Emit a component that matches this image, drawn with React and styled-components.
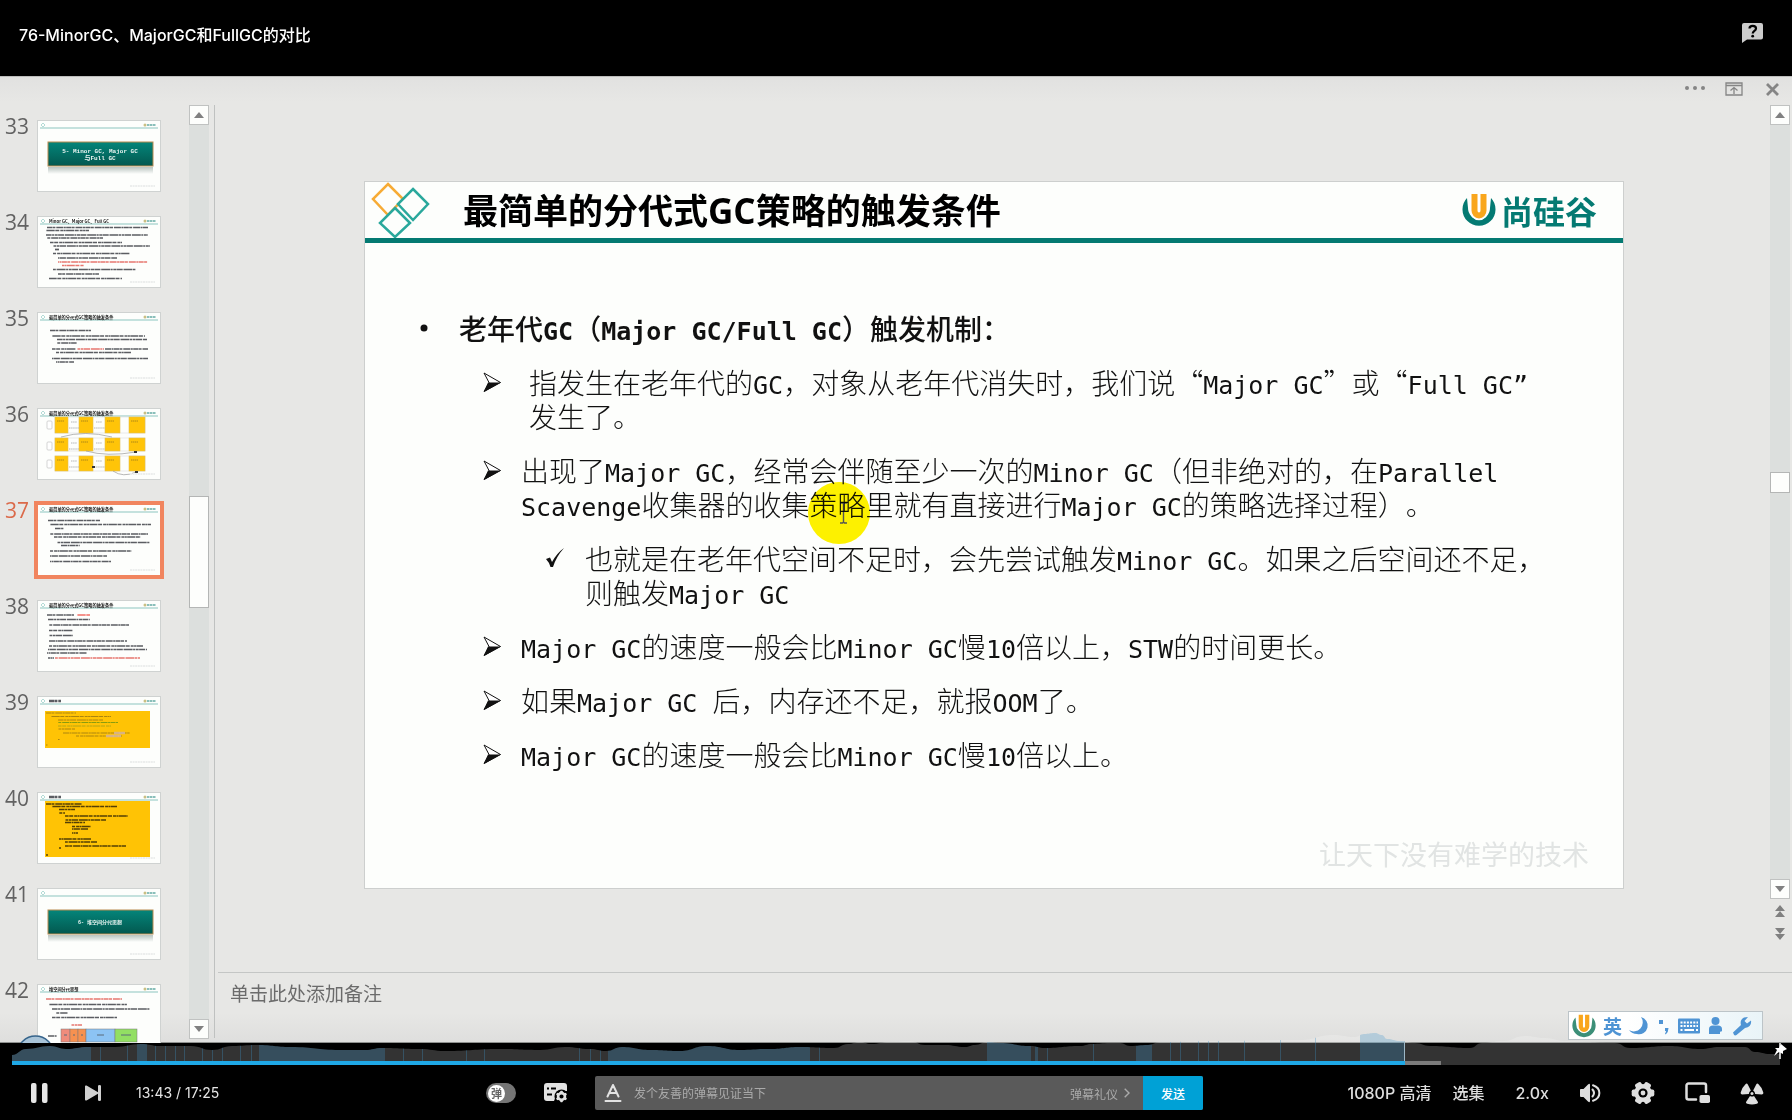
import React from "react";
import styled, { createGlobalStyle, css } from "styled-components";

const SANS = `"Inter", "Noto Sans CJK SC", sans-serif`;
const TEAL = "#047a72";

const Global = createGlobalStyle`
  *, *::before, *::after { box-sizing: border-box; }
  body { margin: 0; background: #000; font-family: ${SANS}; }
  button { margin: 0; padding: 0; border: 0; background: none; color: inherit; font: inherit; cursor: pointer; }
  input { margin: 0; padding: 0; border: 0; background: none; font: inherit; }
  ul { margin: 0; padding: 0; list-style: none; }
  h1, h2, p { margin: 0; }
  svg { display: block; }
`;

/* ---------- page ---------- */

const Page = styled.div`
  display: flex;
  flex-direction: column;
  height: 100vh;
  background: #000;
`;

const Header = styled.header`
  display: flex;
  align-items: flex-start;
  justify-content: space-between;
  height: 76px;
  padding: 23px 29px 0 19px;
  color: #fff;
`;

const VideoTitle = styled.h1`
  font-size: 16px;
  font-weight: 500;
  line-height: 24px;
`;

const Video = styled.main`
  position: relative;
  display: flex;
  flex: 1;
  flex-direction: column;
  min-height: 0;
  background: linear-gradient(#e1e1e0, #e7e7e5 26px, #e7e7e5 calc(100% - 30px), #dededd);
  box-shadow: inset 0 1px #bdbdbc, inset 0 -1px #8e908e;
`;

const WindowBar = styled.div`
  display: flex;
  align-items: flex-start;
  justify-content: flex-end;
  gap: 20px;
  height: 29px;
  padding: 4px 11px 0;
  color: #858585;
`;

const Workspace = styled.div`
  display: flex;
  flex: 1;
  min-height: 0;
`;

/* ---------- slide list ---------- */

const ThumbPane = styled.nav`
  width: 189px;
  padding: 15px 0 0 5px;
  overflow: hidden;
`;

const ThumbList = styled.ul`
  display: flex;
  flex-direction: column;
  gap: 24px;
`;

const ThumbItem = styled.li`
  display: flex;
  align-items: flex-start;
  height: 72px;
`;

const ThumbNumber = styled.span`
  width: 32px;
  font: 21px/12px "Open Sans", sans-serif;
  color: ${(p) => (p.$active ? "#db6a4a" : "#626262")};
`;

const ThumbButton = styled.button`
  width: 124px;
  height: 72px;
  overflow: hidden;
  background: #fdfefc;
  border: 1px solid #cfd2d1;
  ${(p) =>
    p.$active &&
    css`
      border-color: #f1855f;
      outline: 3px solid #f1855f;
    `}
`;

/* ---------- scroll bars ---------- */

const ScrollBar = styled.div`
  display: flex;
  flex: none;
  flex-direction: column;
  width: 20px;
  margin-right: ${(p) => p.$right}px;
  margin-bottom: ${(p) => p.$bottom}px;
  background: linear-gradient(#dcdfdd, #dcdfdd) top / 100% calc(100% - ${(p) => p.$tail}px) no-repeat;
`;

const ScrollArrow = styled.button`
  display: grid;
  place-items: center;
  flex: none;
  height: 20px;
  background: #fdfefc;
  border: 1px solid #c0c2c1;
`;

const ScrollSpace = styled.div`
  flex: ${(p) => p.$grow};
`;

const ScrollThumb = styled.div`
  flex: none;
  height: ${(p) => p.$size}px;
  background: #fdfefc;
  border: 1px solid #b4b6b5;
`;

const PageArrow = styled.button`
  display: grid;
  place-items: center;
  height: 23px;
`;

/* ---------- stage ---------- */

const Main = styled.section`
  display: flex;
  flex: 1;
  flex-direction: column;
  min-width: 0;
  margin-bottom: 5px;
  border-left: 1px solid #bfc1c0;
`;

const StageRow = styled.div`
  display: flex;
  flex: 1;
  min-height: 0;
`;

const Stage = styled.div`
  display: flex;
  flex: 1;
  align-items: center;
  min-width: 0;
  padding: 0 146px 7px 149px;
`;

const Notes = styled.input`
  height: 66px;
  margin-left: 3px;
  padding: 0 12px 26px;
  border-top: 1px solid #c4c6c5;
  outline: 0;
  font: 19px/24px "Noto Sans CJK SC", sans-serif;
  color: #666;
  &::placeholder { color: #6b6b6b; opacity: 1; }
`;

const Slide = styled.article`
  position: relative;
  display: flex;
  flex-direction: column;
  width: 100%;
  aspect-ratio: 16 / 9;
  background: #fdfefc;
  border: 1px solid #cdcfce;
  color: #111;
  text-spacing-trim: space-all;
`;

const SlideHead = styled.header`
  display: flex;
  align-items: center;
  height: 61px;
  padding: 0 26px 0 6px;
  border-bottom: 5px solid ${TEAL};
`;

const SlideTitle = styled.h2`
  flex: 1;
  padding: 2px 0 0 32px;
  font: 700 35px/50px "Open Sans", "Noto Sans CJK SC", sans-serif;
  color: #000;
`;

const Brand = styled.div`
  display: flex;
  align-items: center;
  gap: 5px;
  font: 700 32px/40px "Noto Sans CJK SC", sans-serif;
  color: ${TEAL};
`;

const Points = styled.ul`
  display: flex;
  flex: 1;
  flex-direction: column;
  gap: 20px;
  padding-top: 68px;
`;

const indents = { 1: [54, 40], 2: [118, 38], 3: [181, 39] };

const Point = styled.li`
  display: flex;
  padding-left: ${(p) => indents[p.$level][0]}px;
  font: ${(p) => (p.$level === 1 ? 500 : 300)} 28px/34px "Noto Sans CJK SC", sans-serif;
`;

const Marker = styled.span`
  display: flex;
  flex: none;
  align-items: center;
  width: ${(p) => indents[p.$level][1] + (p.$wide ? 8 : 0)}px;
  height: 34px;
`;

const Code = styled.span`
  font: ${(p) => (p.$bold ? 700 : 400)} 25px/0 "DejaVu Sans Mono", monospace;
  white-space: pre;
`;

const Motto = styled.p`
  padding: 0 34px 14px;
  font: 27px/40px "Noto Sans CJK SC", sans-serif;
  color: #e1e4e3;
  text-align: right;
`;

const Spotlight = styled.div`
  position: absolute;
  top: 300px;
  left: 443px;
  display: grid;
  place-items: center;
  width: 62px;
  height: 62px;
  padding-left: 8px;
  background: #fff200;
  border-radius: 50%;
  mix-blend-mode: multiply;
`;

const ImeBar = styled.div`
  position: absolute;
  right: 29px;
  bottom: 3px;
  display: flex;
  align-items: center;
  gap: 7px;
  height: 29px;
  padding: 0 9px 0 3px;
  background: linear-gradient(100deg, #fff 30%, #e9f4f8);
  border: 1px solid #bcc4c8;
  font: 700 19px/24px "Noto Sans CJK SC", sans-serif;
  color: #4f94d4;
`;

/* ---------- player bar ---------- */

const PlayerBar = styled.footer`
  position: relative;
  flex: none;
  padding: 18px 12px 0;
`;

const HeatMap = styled.svg`
  position: absolute;
  top: -13px;
  left: 12px;
  width: calc(100% - 24px);
  height: 31px;
`;

const PinMark = styled.svg`
  position: absolute;
  top: 0;
  right: 4px;
`;

const Track = styled.div`
  position: relative;
  height: 4px;
  background: #333;
`;

const TrackFill = styled.div`
  position: absolute;
  inset: 0 auto 0 0;
  width: ${(p) => p.$to}%;
  background: ${(p) => p.$color};
`;

const Controls = styled.div`
  display: flex;
  align-items: center;
  height: 55px;
  padding: 1px 16px 0 19px;
  color: #dedede;
`;

const Group = styled.div`
  display: flex;
  flex: none;
  align-items: center;
  gap: ${(p) => p.$gap || 0}px;
  width: ${(p) => (p.$width ? p.$width + "px" : "auto")};
`;

const Time = styled.span`
  font-size: 14px;
  line-height: 20px;
  color: #e6e6e6;
`;

const Switch = styled.label`
  position: relative;
  display: flex;
  align-items: center;
  width: 30px;
  height: 20px;
  padding: 2px;
  background: #757575;
  border-radius: 10px;
  cursor: pointer;
  input { position: absolute; inset: 0; opacity: 0; }
`;

const Knob = styled.span`
  flex: none;
  width: 17px;
  height: 17px;
  border-radius: 50%;
  background: #fff;
  font: 700 11px/17px "Noto Sans CJK SC", sans-serif;
  color: #666;
  text-align: center;
`;

const DanmakuBox = styled.form`
  display: flex;
  align-items: center;
  flex: 1;
  height: 34px;
  max-width: 608px;
  margin-right: auto;
  overflow: hidden;
  background: #5a5a5a;
  border-radius: 2px;
  font-size: 12px;
`;

const FontButton = styled.button`
  width: 39px;
  padding-left: 9px;
`;

const DanmakuInput = styled.input`
  flex: 1;
  min-width: 0;
  outline: 0;
  color: #fff;
  &::placeholder { color: #aaa; opacity: 1; }
`;

const Etiquette = styled.a`
  display: flex;
  align-items: center;
  gap: 6px;
  padding-right: 13px;
  color: #aaa;
  text-decoration: none;
`;

const Send = styled.button`
  width: 60px;
  height: 34px;
  background: #00a1d6;
  color: #fff;
  font-weight: 500;
`;

const TextButton = styled.button`
  font-size: 16px;
  font-weight: 500;
  line-height: 24px;
`;

/* ---------- drawings ---------- */

const BrandMark = ({ size, ring = TEAL }) => (
  <svg width={size} height={size} viewBox="0 0 34 34" aria-hidden="true">
    <path d="M5 5A16.500 16.500 0 1 0 29 5L28 15A11 11.500 0 1 1 6 15Z" fill={ring} />
    <path d="M12.500 1V17.500a4.500 5 0 0 0 9 0V1" fill="none" stroke="#fff" strokeWidth="9.500" />
    <path d="M12.500 1V17.500a4.500 5 0 0 0 9 0V1" fill="none" stroke="#f9a61c" strokeWidth="6" />
  </svg>
);

const Diamonds = () => (
  <svg width="60" height="56" viewBox="0 0 60 56" fill="none" strokeWidth="2.500" aria-hidden="true">
    <path d="M17 2L32 17L17 33L2 17Z" stroke="#f7ab35" />
    <path d="M42 7L57 22L42 38L27 22Z" stroke="#2aa89c" fill="#fdfefc" />
    <path d="M24 26L39 41L24 55L9 41Z" stroke="#2aa89c" fill="#fdfefc" />
  </svg>
);

const Arrow = ({ down }) => (
  <svg width="10" height="6" viewBox="0 0 10 6" aria-hidden="true">
    <path d={down ? "M0 0H10L5 6Z" : "M0 6H10L5 0Z"} fill="#808080" />
  </svg>
);

const DoubleArrow = ({ down }) => (
  <svg width="10" height="12" viewBox="0 0 10 12" aria-hidden="true">
    <path d={down ? "M0 0H10L5 6ZM0 6H10L5 12Z" : "M0 6H10L5 0ZM0 12H10L5 6Z"} fill="#808080" />
  </svg>
);

const markers = {
  1: (
    <svg width="10" height="10"><circle cx="5" cy="5" r="3.500" fill="#111" /></svg>
  ),
  2: (
    <svg width="19" height="20" viewBox="0 0 19 20">
      <path d="M1 1L17.500 10.500L1 19.500L6 10.500Z" fill="#fff" stroke="#111" />
      <path d="M5 10.500H18L1 20Z" fill="#111" />
    </svg>
  ),
  3: (
    <svg width="19" height="20" viewBox="0 0 19 20">
      <path d="M0 11L4 9.500L6 14Q11 5 18 0Q10 9 7 19H4.500Q3 14 0 11Z" fill="#111" />
    </svg>
  ),
};

/* ---------- slide body ---------- */

const points = [
  { level: 1, lines: ["老年代GC（Major GC/Full GC）触发机制："] },
  { level: 2, wide: true, lines: ["指发生在老年代的GC，对象从老年代消失时，我们说“Major GC”或“Full GC''", "发生了。"] },
  { level: 2, lines: ["出现了Major GC，经常会伴随至少一次的Minor GC（但非绝对的，在Parallel", "Scavenge收集器的收集策略里就有直接进行Major GC的策略选择过程）。"] },
  { level: 3, lines: ["也就是在老年代空间不足时，会先尝试触发Minor GC。如果之后空间还不足，", "则触发Major GC"] },
  { level: 2, lines: ["Major GC的速度一般会比Minor GC慢10倍以上，STW的时间更长。"] },
  { level: 2, lines: ["如果Major GC 后，内存还不足，就报OOM了。"] },
  { level: 2, lines: ["Major GC的速度一般会比Minor GC慢10倍以上。"] },
];

const Mixed = ({ text, bold }) =>
  text
    .split(/([\x20-\x7e]+)/)
    .filter(Boolean)
    .map((run, i) =>
      /^[\x20-\x7e]/.test(run) ? (
        <Code key={i} $bold={bold}>{run.replace("''", "”")}</Code>
      ) : (
        <React.Fragment key={i}>{run}</React.Fragment>
      )
    );

/* ---------- miniature slides ---------- */

const K = "#33363c";
const R = "#e2564c";
const dashes = ["5 .4 3 .9 7 .5 2 .4", "2 .4 8 .6 4 1 3 .4", "9 .5 2 .6 3 .4 6 .8"];

/* each row of a miniature: [x start, x end, y, colour] */
const Rows = ({ rows, heavy }) =>
  rows.map(([a, b, y, c = K], i) => (
    <line key={i} x1={a} x2={b} y1={y} y2={y} stroke={c} strokeWidth={heavy || 1.7}
      strokeDasharray={dashes[i % 3]} strokeDashoffset={i * 1.7} opacity=".8" />
  ));

const TITLE = "最简单的分代式GC策略的触发条件";

const MiniFrame = ({ title, children }) => (
  <svg width="122" height="70" viewBox="1 1 122 70" aria-hidden="true">
    <path d="M4 5L6 3L8 5L6 7Z" fill="none" stroke="#9fd2cc" strokeWidth=".8" />
    <line x1="3" x2="121" y1="8" y2="8" stroke="#8cc5bf" />
    <circle cx="108" cy="5" r="1.500" fill="#c9bf83" />
    <line x1="110" x2="119" y1="5" y2="5" stroke="#8abfba" strokeWidth="2.200" strokeDasharray="2.500 .5" />
    {title && (
      <text x="12" y="6.500" fontSize="4.200" fontWeight="700" fill="#222" fontFamily="Noto Sans CJK SC, sans-serif">{title}</text>
    )}
    {children}
    <line x1="93" x2="118" y1="66" y2="66" stroke="#eceeed" strokeWidth="2" strokeDasharray="2 .6" />
  </svg>
);

const Banner = ({ id, lines }) => (
  <MiniFrame>
    <defs>
      <linearGradient id={id} x2="0" y2="1"><stop stopColor="#04857a" /><stop offset="1" stopColor="#03584f" /></linearGradient>
      <linearGradient id={id + "s"} x2="0" y2="1"><stop stopColor="#b9c4c0" /><stop offset="1" stopColor="#fdfefc" /></linearGradient>
    </defs>
    <rect x="11" y="47" width="105" height="7" fill={`url(#${id}s)`} />
    <rect x="11" y="22" width="105" height="24" fill={`url(#${id})`} stroke="#b98a4e" strokeWidth="1" />
    {lines.map((t, i) => (
      <text key={t} x="63" y={lines.length > 1 ? 32.5 + i * 7 : 36} textAnchor="middle" fontSize={lines.length > 1 ? 6 : 5} fontWeight="700" fill="#e9f4f1"
        fontFamily="Liberation Mono, Noto Sans CJK SC, monospace">{t}</text>
    ))}
  </MiniFrame>
);

const minis = {
  33: <Banner id="b33" lines={["5- Minor GC, Major GC", "与Full GC"]} />,
  34: (
    <MiniFrame title="Minor GC、Major GC、Full GC">
      <Rows rows={[[10, 111, 11.5], [9, 52, 14.5], [9, 111, 19], [10, 66, 22], [13, 85, 26.5], [16, 113, 30], [18, 22, 33.5], [16, 93, 37.5], [21, 80, 42], [21, 111, 46, R], [25, 47, 49.5, R], [16, 99, 53.5], [21, 62, 58], [12, 85, 62.5]]} />
    </MiniFrame>
  ),
  35: (
    <MiniFrame title={TITLE}>
      <Rows rows={[[13, 54, 18.5], [15, 108, 24], [20, 110, 27.5], [20, 40, 31], [15, 39, 37], [40, 67, 37, R], [68, 111, 37], [19, 94, 40.5], [15, 111, 46.5], [19, 37, 50]]} />
    </MiniFrame>
  ),
  36: (
    <MiniFrame title={TITLE}>
      {[[9, 16], [30, 13], [48, 15]].map(([y, h]) => (
        <g key={y}>
          <rect x="18" y={y} width="90" height={h} fill="none" stroke="#ddd" strokeWidth=".6" />
          <rect x="10" y={y + 4} width="5" height="8" rx="1" fill="#fff" stroke="#bbb" strokeWidth=".6" />
          {[[18, 13], [42, 14], [68, 15], [92, 16]].map(([x, w]) => (
            <g key={x}>
              <rect x={x} y={y} width={w} height={h} fill="#ffc408" stroke="#e3bf52" strokeWidth=".6" />
              <line x1={x + 2} x2={x + 9} y1={y + 4} y2={y + 4} stroke="#9a7b1c" strokeWidth=".8" strokeDasharray="1.500 .5" />
            </g>
          ))}
          <path d={`M32 ${y + 11}H42M57 ${y + 11}H68M34 ${y + 5}h6M59 ${y + 5}h6`} stroke="#999" strokeWidth=".7" strokeDasharray="1.500 .6" />
        </g>
      ))}
      <path d="M24 29Q48 22 75 29M49 43Q70 49 99 44M76 63Q86 70 99 64" fill="none" stroke="#999" strokeWidth=".7" />
      <path d="M97 43h3v2h-3zM55 58h3v2h-3zM98 63h3v2h-3z" fill="#333" />
    </MiniFrame>
  ),
  37: (
    <MiniFrame title={TITLE}>
      <Rows rows={[[11, 63, 16.5], [13, 114, 20.5], [18, 27, 24.5], [13, 111, 30], [17, 104, 33], [20, 113, 38.5], [24, 43, 41.5], [13, 95, 47], [13, 70, 52], [13, 74, 57.5]]} />
    </MiniFrame>
  ),
  38: (
    <MiniFrame title={TITLE}>
      <Rows rows={[[10, 37, 15], [40, 53, 15, "#f04a40"], [11, 53, 19.5], [12, 92, 25], [12, 36, 30.5], [12, 36, 35.5], [12, 90, 41], [12, 106, 46], [11, 110, 49.5], [10, 50, 53], [11, 17, 58], [18, 103, 58, R]]} />
    </MiniFrame>
  ),
  39: (
    <MiniFrame>
      <Rows heavy={2.5} rows={[[12, 24, 5]]} />
      <rect x="8" y="15" width="105" height="37" fill="#ffc305" />
      <Rows heavy={0.9} rows={[[9, 39, 17, "#8a6d14"], [14, 74, 20.5, "#8a6d14"], [21, 66, 24, "#8a6d14"], [21, 81, 26.5, "#5b8f12"], [21, 74, 30, "#9a9a1a"], [21, 38, 33, "#8a6d14"], [26, 93, 37, "#8a6d14"], [39, 85, 40, "#8a6d14"], [21, 23, 43.5, "#8a6d14"], [9, 11, 49, "#8a6d14"]]} />
      <path d="M77 37h11M69 40h15" stroke="#d8b7a0" strokeWidth="2.500" opacity=".8" />
    </MiniFrame>
  ),
  40: (
    <MiniFrame>
      <Rows heavy={2.5} rows={[[12, 24, 5]]} />
      <rect x="8" y="9" width="105" height="56" fill="#ffc305" />
      <Rows heavy={1.6} rows={[[9, 45, 12], [15, 80, 14.5], [22, 38, 17.5], [22, 28, 21], [28, 91, 24], [28, 69, 28], [28, 48, 30.5], [35, 54, 34.5], [35, 51, 37], [35, 41, 41], [22, 54, 47], [28, 60, 50], [28, 89, 54], [22, 24, 56], [9, 11, 63]].map((r) => [...r, "#2a1f05"])} />
    </MiniFrame>
  ),
  41: <Banner id="b41" lines={["6- 堆空间分代思想"]} />,
  42: (
    <MiniFrame title="堆空间分代思想">
      <Rows rows={[[9, 85, 15, R], [12, 90, 20.5], [15, 113, 25], [19, 31, 29], [15, 80, 33.5], [34, 45, 41, R], [11, 20, 52]]} />
      {[[24, 9, "#f08c7c"], [33, 8, "#f79150"], [41, 8, "#f79150"], [49, 29, "#8cc3f4"], [78, 22, "#92df63"]].map(([x, w, c]) => (
        <rect key={x} x={x} y="45" width={w} height="13" fill={c} stroke="#777" strokeWidth=".5" />
      ))}
      <path d="M27 51h3M36 51h2M44 51h2M60 51h7M84 51h10" stroke="#5a6a7a" strokeWidth="1" />
    </MiniFrame>
  ),
};

/* ---------- viewing heat curve ---------- */

const curve = [
  [12, 1055], [26, 1049], [50, 1046], [66, 1049], [88, 1047], [115, 1047], [141, 1044], [160, 1046], [191, 1046], [212, 1050],
  [232, 1046], [257, 1045], [291, 1047], [340, 1050], [365, 1050], [382, 1048], [420, 1049], [445, 1051], [500, 1049], [540, 1050],
  [565, 1047], [590, 1049], [606, 1051], [622, 1047], [650, 1050], [680, 1051], [707, 1046], [740, 1050], [770, 1049], [800, 1047],
  [834, 1048], [848, 1044], [860, 1042], [871, 1044], [890, 1042], [910, 1041], [925, 1045], [945, 1045], [965, 1047], [975, 1045],
  [987, 1042], [1000, 1043], [1030, 1046], [1045, 1048], [1080, 1046], [1092, 1044], [1110, 1043], [1120, 1043], [1130, 1046], [1148, 1045],
  [1160, 1042], [1220, 1041], [1300, 1040], [1333, 1035], [1355, 1037], [1364, 1034], [1375, 1033], [1382, 1035], [1387, 1039], [1400, 1041],
  [1415, 1043], [1430, 1046], [1470, 1048], [1482, 1043], [1503, 1041], [1525, 1036], [1545, 1038], [1565, 1041], [1615, 1043], [1630, 1048],
  [1670, 1046], [1700, 1049], [1720, 1047], [1745, 1047], [1755, 1052], [1770, 1054], [1780, 1054],
];

const curvePath = (() => {
  let d = `M12 1061L${curve[0].join(" ")}`;
  for (let i = 1; i < curve.length; i++) {
    const [x0, y0] = curve[i - 1];
    const [x1, y1] = curve[i];
    const m = (x0 + x1) / 2;
    d += `C${m} ${y0} ${m} ${y1} ${x1} ${y1}`;
  }
  return d + "L1780 1061Z";
})();

const hotRanges = [[12, 91], [137, 147], [259, 385], [608, 810], [987, 1031], [1035, 1038], [1136, 1152], [1360, 1404]];
const ticks = [100, 127, 155, 165, 175, 184, 202, 212, 222, 240, 251, 403, 422, 466, 484, 579, 590, 600, 819, 1047, 1093, 1170, 1180, 1198, 1208, 1218, 1244, 1280, 1315];

const Heat = () => (
  <HeatMap viewBox="12 1030 1768 31" preserveAspectRatio="none" aria-hidden="true">
    <defs>
      <clipPath id="heat"><path d={curvePath} /></clipPath>
      <clipPath id="above"><rect x="12" y="1030" width="60" height="13" /></clipPath>
    </defs>
    <circle cx="35.500" cy="1054" r="18" fill="#a9c4d8" stroke="#36648b" strokeWidth="1.500" clipPath="url(#above)" />
    <path d={curvePath} fill="#fff" fillOpacity=".2" />
    <g clipPath="url(#heat)">
      {hotRanges.map(([a, b]) => (
        <rect key={a} x={a} y="1030" width={b - a} height="31" fill="#3f8fc0" fillOpacity=".3" />
      ))}
      {ticks.map((x) => (
        <rect key={x} x={x} y="1030" width="1" height="31" fill="#3f8fc0" fillOpacity=".34" />
      ))}
      <rect x="1404" y="1030" width="1" height="31" fill="#9db7c6" />
    </g>
  </HeatMap>
);

/* ---------- control icons ---------- */

const PauseIcon = () => (
  <svg width="17" height="20" viewBox="0 0 17 20"><rect width="5.500" height="20" rx="2" fill="#e6e6e6" /><rect x="11" width="5.500" height="20" rx="2" fill="#e6e6e6" /></svg>
);
const NextIcon = () => (
  <svg width="16" height="16" viewBox="0 0 16 16" fill="#d0d0d0"><path d="M0 1.500Q0 0 1.500 .6L13 7.300V1a1.500 1 0 0 1 3 0V15a1.500 1 0 0 1-3 0V8.700L1.500 15.400Q0 16 0 14.500Z" /></svg>
);
const DanmakuSettingsIcon = () => (
  <svg width="24" height="20" viewBox="0 0 24 20">
    <path d="M3 0H20a3 3 0 0 1 3 3V8H14L10 18H3a3 3 0 0 1-3-3V3a3 3 0 0 1 3-3Z" fill="#e2e2e2" />
    <path d="M3 5.500H5M7 5.500H12M3 11.500H8" stroke="#000" strokeWidth="2" />
    <circle cx="17.500" cy="13.500" r="7" fill="#000" />
    <circle cx="17.500" cy="13.500" r="3.400" fill="none" stroke="#e2e2e2" strokeWidth="2.600" />
    {[0, 60, 120, 180, 240, 300].map((a) => (
      <rect key={a} x="16.200" y="7.800" width="2.600" height="2.500" rx=".8" fill="#e2e2e2" transform={`rotate(${a} 17.500 13.500)`} />
    ))}
  </svg>
);
const FontIcon = () => (
  <svg width="18" height="18" viewBox="0 0 18 18" fill="none" stroke="#e2e2e2" strokeWidth="2" strokeLinecap="round" strokeLinejoin="round">
    <path d="M3.500 12.500L9 1L14.500 12.500M5.500 9H12.500M1.500 17H16.500" />
  </svg>
);
const VolumeIcon = () => (
  <svg width="22" height="20" viewBox="0 0 22 20">
    <path d="M1 6.500Q1 6 2 6H4.500L9 1.500Q11 0 11 2V18Q11 20 9 18.500L4.500 14H2Q1 14 1 13Z" fill="#dedede" />
    <path d="M13.500 6.500Q16.500 10 13.500 13.500M14 2.200C22.500 5 22.500 15 14 17.800" fill="none" stroke="#dedede" strokeWidth="2" strokeLinecap="round" />
  </svg>
);
const gear = Array.from({ length: 6 }, (_, i) => i * 60);
const GearIcon = () => (
  <svg width="24" height="24" viewBox="0 0 24 24">
    {gear.map((a) => <rect key={a} x="8.500" y=".7" width="7" height="6" rx="1.800" fill="#dedede" transform={`rotate(${a + 30} 12 12)`} />)}
    <circle cx="12" cy="12" r="9" fill="#dedede" />
    <circle cx="12" cy="12" r="4.600" fill="#000" /><circle cx="12" cy="12" r="2.400" fill="#dedede" />
  </svg>
);
const PipIcon = () => (
  <svg width="25" height="22" viewBox="0 0 25 22">
    <path d="M11 17.500H3.500a2 2 0 0 1-2-2V3.500a2 2 0 0 1 2-2H19a2 2 0 0 1 2 2V10" fill="none" stroke="#dedede" strokeWidth="2.500" strokeLinecap="round" />
    <rect x="14.500" y="13" width="10.500" height="8" rx="1.800" fill="#dedede" />
  </svg>
);
const WideIcon = () => (
  <svg width="24" height="24" viewBox="0 0 24 24" fill="#dedede">
    {[0, 120, 240].map((a) => <path key={a} d="M10 16.500Q12 17.500 14 16.500L17.800 22.200Q18.500 23.800 16.800 24.300Q12 25.800 7.200 24.300Q5.500 23.800 6.200 22.200Z" transform={`rotate(${a} 12 12.500) translate(0 -1.500)`} />)}
    <circle cx="12" cy="12.500" r="1.500" />
  </svg>
);

const ImeIcons = () => (
  <svg width="124" height="20" viewBox="0 0 124 20" fill="#4f94d4" role="img" aria-label="输入法工具">
    <path d="M12 1A9 9 0 0 1 0 14Q3 18 8 18A8.500 8.500 0 0 0 12 1Z" />
    <rect x="30" y="4" width="4" height="4" /><path d="M36 12h3.500q0 4-2.800 6.500l-.7-1q1-1.500 1-2.500h-1z" />
    <rect x="49" y="2.500" width="22" height="15" rx="1" />
    <path d="M51.500 6.500H69M51.500 10H69" stroke="#fff" strokeWidth="2" strokeDasharray="2 1.200" /><path d="M51.500 14H53.500M55.500 14H65M67 14H69" stroke="#fff" strokeWidth="2" />
    <circle cx="86.500" cy="5" r="4" /><path d="M80 18V13q0-3.500 4-3.500h5q4 0 4 3.500V15q-1 1-2 .5V18Z" />
    <path d="M104 16.500L112 9Q110.500 4 115 1.500L119 1L115.500 5L118 7.500L122 4.500Q123 11 116 12L107.500 19Q105 20.500 104 16.500Z" />
  </svg>
);

const noop = (e) => e.preventDefault();

export default function App() {
  return (
    <Page lang="zh-CN">
      <Global />
      <Header>
        <VideoTitle>76-MinorGC、MajorGC和FullGC的对比</VideoTitle>
        <button aria-label="帮助">
          <svg width="21" height="20" viewBox="0 0 21 20">
            <path d="M2 0H19a2 2 0 0 1 2 2V14.500a2 2 0 0 1-2 2H5L0 20V2a2 2 0 0 1 2-2Z" fill="#ccc" />
            <path d="M7.500 5.500C7.500 2 14 2 14 5.500C14 8 10.700 7.800 10.700 10.500" fill="none" stroke="#000" strokeWidth="2.200" />
            <circle cx="10.700" cy="13.200" r="1.400" fill="#000" />
          </svg>
        </button>
      </Header>

      <Video>
        <WindowBar>
          <svg width="20" height="16" viewBox="0 0 20 16" fill="currentColor"><circle cx="2" cy="8" r="2" /><circle cx="10" cy="8" r="2" /><circle cx="18" cy="8" r="2" /></svg>
          <svg width="18" height="18" viewBox="0 0 18 18" fill="none" stroke="currentColor" strokeWidth="1.300"><path d="M1 3H17V15H1ZM1 5.500H17M9 14V8M5.500 10.500L9 7.500L12.500 10.500" /></svg>
          <button aria-label="关闭">
            <svg width="18" height="18" viewBox="0 0 18 18" stroke="currentColor" strokeWidth="2.800"><path d="M4 4L15 15M15 4L4 15" /></svg>
          </button>
        </WindowBar>

        <Workspace>
          <ThumbPane aria-label="幻灯片">
            <ThumbList>
              {Object.keys(minis).map((n) => (
                <ThumbItem key={n}>
                  <ThumbNumber $active={n === "37"}>{n}</ThumbNumber>
                  <ThumbButton $active={n === "37"} aria-label={`幻灯片 ${n}`}>{minis[n]}</ThumbButton>
                </ThumbItem>
              ))}
            </ThumbList>
          </ThumbPane>
          <ScrollBar $right={5} $bottom={4} $tail={0}>
            <ScrollArrow aria-label="向上"><Arrow /></ScrollArrow>
            <ScrollSpace $grow={371} />
            <ScrollThumb $size={112} />
            <ScrollSpace $grow={410} />
            <ScrollArrow aria-label="向下"><Arrow down /></ScrollArrow>
          </ScrollBar>

          <Main>
            <StageRow>
              <Stage>
                <Slide>
                  <SlideHead>
                    <Diamonds />
                    <SlideTitle>最简单的分代式GC策略的触发条件</SlideTitle>
                    <Brand><BrandMark size={34} />尚硅谷</Brand>
                  </SlideHead>
                  <Points>
                    {points.map((p, i) => (
                      <Point key={i} $level={p.level}>
                        <Marker $level={p.level} $wide={p.wide}>{markers[p.level]}</Marker>
                        <p>
                          {p.lines.map((line, j) => (
                            <React.Fragment key={j}>
                              {j > 0 && <br />}
                              <Mixed text={line} bold={p.level === 1} />
                            </React.Fragment>
                          ))}
                        </p>
                      </Point>
                    ))}
                  </Points>
                  <Motto>让天下没有难学的技术</Motto>
                  <Spotlight>
                    <svg width="9" height="22" viewBox="0 0 9 22" fill="none" stroke="#555" strokeWidth="1.400"><path d="M1 1H3.500L4.500 2L5.500 1H8M4.500 2V20M1 21H3.500L4.500 20L5.500 21H8" /></svg>
                  </Spotlight>
                </Slide>
              </Stage>
              <ScrollBar $right={2} $bottom={27} $tail={46}>
                <ScrollArrow aria-label="向上"><Arrow /></ScrollArrow>
                <ScrollSpace $grow={347} />
                <ScrollThumb $size={21} />
                <ScrollSpace $grow={386} />
                <ScrollArrow aria-label="向下"><Arrow down /></ScrollArrow>
                <PageArrow aria-label="上一张"><DoubleArrow /></PageArrow>
                <PageArrow aria-label="下一张"><DoubleArrow down /></PageArrow>
              </ScrollBar>
            </StageRow>
            <Notes aria-label="备注" placeholder="单击此处添加备注" />
          </Main>
        </Workspace>

        <ImeBar>
          <BrandMark size={24} ring="#3c8f78" />
          <span>英</span>
          <ImeIcons />
        </ImeBar>
      </Video>

      <PlayerBar>
        <Heat />
        <Track>
          <TrackFill $to={80.8} $color="#7b7b7b" />
          <TrackFill $to={78.8} $color="#1fa8e6" />
        </Track>
        <PinMark width="14" height="18" viewBox="0 0 14 18">
          <path d="M6 0V16" stroke="#fff" strokeWidth="1.500" />
          <path d="M7 1L13 6L9 8V11L5 9L0 13L3 7L1 5L5 5Z" fill="#fff" />
        </PinMark>
        <Controls>
          <Group $width={455}>
            <Group as="button" $width={54} aria-label="暂停"><PauseIcon /></Group>
            <Group as="button" $width={51} aria-label="下一集"><NextIcon /></Group>
            <Time>13:43 / 17:25</Time>
          </Group>
          <Group $gap={28} $width={109}>
            <Switch><input type="checkbox" aria-label="弹幕开关" /><Knob>弹</Knob></Switch>
            <button aria-label="弹幕设置"><DanmakuSettingsIcon /></button>
          </Group>
          <DanmakuBox onSubmit={noop}>
            <FontButton type="button" aria-label="字体"><FontIcon /></FontButton>
            <DanmakuInput aria-label="弹幕" placeholder="发个友善的弹幕见证当下" />
            <Etiquette href="#etiquette">
              弹幕礼仪
              <svg width="6" height="10" viewBox="0 0 6 10" fill="none" stroke="currentColor" strokeWidth="1.400"><path d="M.7 .7L5 5L.7 9.300" /></svg>
            </Etiquette>
            <Send>发送</Send>
          </DanmakuBox>
          <Group $gap={31}>
            <Group $gap={21}><TextButton>1080P 高清</TextButton><TextButton>选集</TextButton></Group>
            <Group $gap={30}>
              <TextButton>2.0x</TextButton>
              <button aria-label="音量"><VolumeIcon /></button>
              <button aria-label="设置"><GearIcon /></button>
              <button aria-label="画中画"><PipIcon /></button>
              <button aria-label="宽屏"><WideIcon /></button>
            </Group>
          </Group>
        </Controls>
      </PlayerBar>
    </Page>
  );
}
